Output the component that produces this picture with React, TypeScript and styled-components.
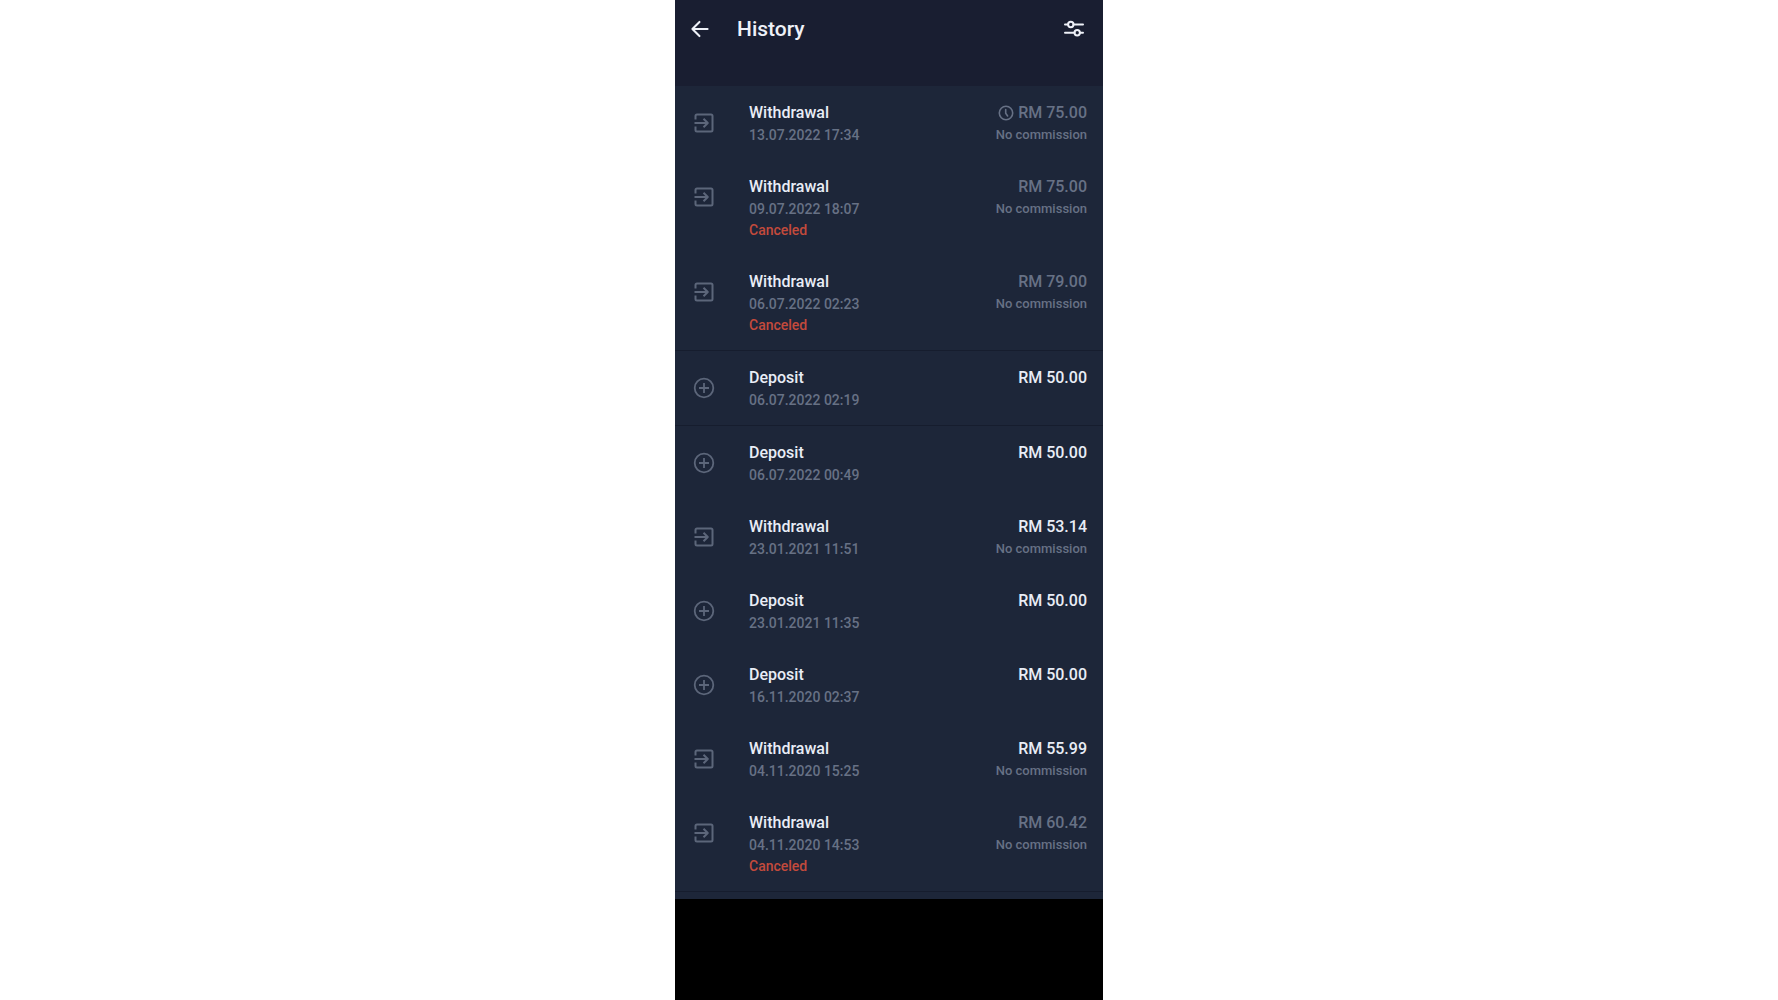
import React from "react";
import styled, { createGlobalStyle } from "styled-components";

const GlobalStyle = createGlobalStyle`
  *, *::before, *::after { box-sizing: border-box; }
  body {
    margin: 0;
    background: #ffffff;
    font-family: Roboto, "Liberation Sans", sans-serif;
  }
`;

const Stage = styled.div`
  display: flex;
  justify-content: center;
  min-height: 100vh;
`;

const Phone = styled.main`
  width: 100%;
  max-width: 428px;
  background: #000000;
`;

const Header = styled.header`
  display: flex;
  align-items: center;
  gap: 24px;
  padding: 9px 19px 37px 12px;
  background: #191e31;
  color: #eef1f8;
`;

const Title = styled.h1`
  flex: 1;
  margin: 0;
  font-size: 21px;
  line-height: 40px;
  font-weight: 500;
`;

const IconButton = styled.button`
  display: flex;
  padding: 0;
  border: 0;
  background: none;
  color: inherit;
  cursor: pointer;
`;

const List = styled.ul`
  margin: 0;
  padding: 0 0 7px;
  list-style: none;
  background: #1d2639;
`;

const Row = styled.li<{ $divided: boolean }>`
  display: flex;
  gap: 33px;
  padding: 15px 16px 14px 17px;
  border-bottom: ${(p) => (p.$divided ? "1px solid #161d2e" : "0")};
`;

const KindIcon = styled.span`
  display: flex;
  align-items: flex-start;
  padding-top: 10px;
  color: #5c667a;
`;

const Details = styled.div`
  flex: 1;
`;

const Amounts = styled.div`
  display: flex;
  flex-direction: column;
  align-items: flex-end;
`;

const Name = styled.div`
  font-size: 16px;
  line-height: 23px;
  font-weight: 500;
  color: #e9edf6;
`;

const Amount = styled(Name)<{ $muted: boolean }>`
  display: flex;
  align-items: center;
  gap: 4px;
  color: ${(p) => (p.$muted ? "#677185" : "#e9edf6")};
`;

const Time = styled.time`
  display: block;
  font-size: 14px;
  line-height: 22px;
  font-weight: 500;
  color: #677185;
`;

const Status = styled.div`
  font-size: 14px;
  line-height: 21px;
  font-weight: 500;
  color: #c34a3c;
`;

const Commission = styled.div`
  font-size: 13px;
  line-height: 21px;
  font-weight: 500;
  color: #677185;
`;

const BackIcon = () => (
  <svg width="26" height="26" viewBox="0 0 24 24" fill="none" stroke="currentColor" strokeWidth="1.9" strokeLinecap="round" strokeLinejoin="round" aria-hidden="true">
    <path d="M19 12H5M11.5 5.5L5 12l6.500 6.500" />
  </svg>
);

const FilterIcon = () => (
  <svg width="20" height="18" viewBox="0 0 20 18" fill="none" stroke="currentColor" strokeWidth="2" strokeLinecap="round" aria-hidden="true">
    <path d="M1 4.500H4M9.500 4.500H19M1 12.800H10.500M16 12.800H19" />
    <circle cx="6.800" cy="4.500" r="2.700" />
    <circle cx="13.200" cy="12.800" r="2.700" />
  </svg>
);

const WithdrawalIcon = () => (
  <svg width="24" height="24" viewBox="0 0 24 24" fill="none" stroke="currentColor" strokeWidth="2" strokeLinejoin="round" aria-hidden="true">
    <path d="M3.500 8.500V5a1.500 1.500 0 0 1 1.500-1.500H19A1.500 1.500 0 0 1 20.500 5V19A1.500 1.500 0 0 1 19 20.500H5A1.500 1.500 0 0 1 3.500 19V15.500" />
    <path d="M2.500 12H15.500M11.500 7.700L15.800 12L11.500 16.300" />
  </svg>
);

const DepositIcon = () => (
  <svg width="24" height="24" viewBox="0 0 24 24" fill="none" stroke="currentColor" strokeWidth="1.800" aria-hidden="true">
    <circle cx="12" cy="12" r="9.300" />
    <path d="M12 7V17M7 12H17" />
  </svg>
);

const PendingIcon = () => (
  <svg width="16" height="16" viewBox="0 0 16 16" fill="none" stroke="currentColor" strokeWidth="1.600" strokeLinecap="round" role="img" aria-label="Pending">
    <circle cx="8" cy="8" r="6.700" />
    <path d="M7.700 4.500V8.300L9.600 11" />
  </svg>
);

type Entry = {
  kind: "Withdrawal" | "Deposit";
  time: string;
  amount: string;
  state?: "pending" | "canceled";
  divided?: boolean;
};

const entries: Entry[] = [
  { kind: "Withdrawal", time: "13.07.2022 17:34", amount: "RM 75.00", state: "pending" },
  { kind: "Withdrawal", time: "09.07.2022 18:07", amount: "RM 75.00", state: "canceled" },
  { kind: "Withdrawal", time: "06.07.2022 02:23", amount: "RM 79.00", state: "canceled", divided: true },
  { kind: "Deposit", time: "06.07.2022 02:19", amount: "RM 50.00", divided: true },
  { kind: "Deposit", time: "06.07.2022 00:49", amount: "RM 50.00" },
  { kind: "Withdrawal", time: "23.01.2021 11:51", amount: "RM 53.14" },
  { kind: "Deposit", time: "23.01.2021 11:35", amount: "RM 50.00" },
  { kind: "Deposit", time: "16.11.2020 02:37", amount: "RM 50.00" },
  { kind: "Withdrawal", time: "04.11.2020 15:25", amount: "RM 55.99" },
  { kind: "Withdrawal", time: "04.11.2020 14:53", amount: "RM 60.42", state: "canceled", divided: true },
];

export default function App() {
  return (
    <>
      <GlobalStyle />
      <Stage>
        <Phone>
          <Header>
            <IconButton type="button" aria-label="Back">
              <BackIcon />
            </IconButton>
            <Title>History</Title>
            <IconButton type="button" aria-label="Filter">
              <FilterIcon />
            </IconButton>
          </Header>
          <List>
            {entries.map((e) => (
              <Row key={e.time} $divided={!!e.divided}>
                <KindIcon>{e.kind === "Deposit" ? <DepositIcon /> : <WithdrawalIcon />}</KindIcon>
                <Details>
                  <Name>{e.kind}</Name>
                  <Time>{e.time}</Time>
                  {e.state === "canceled" && <Status>Canceled</Status>}
                </Details>
                <Amounts>
                  <Amount $muted={!!e.state}>
                    {e.state === "pending" && <PendingIcon />}
                    {e.amount}
                  </Amount>
                  {e.kind === "Withdrawal" && <Commission>No commission</Commission>}
                </Amounts>
              </Row>
            ))}
          </List>
        </Phone>
      </Stage>
    </>
  );
}
